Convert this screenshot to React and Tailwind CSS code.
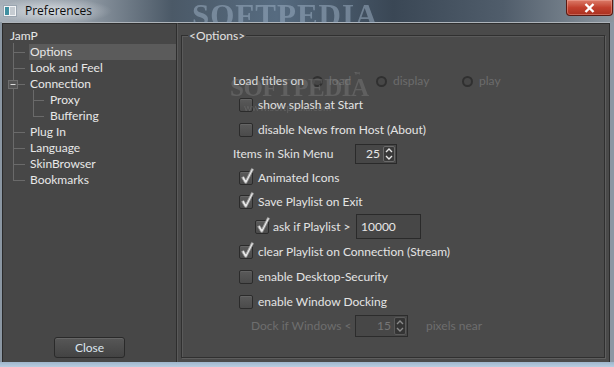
import React from "react";

const FONT = "font-['Lato','Open_Sans',sans-serif]";

function Check() {
  return (
    <svg className="absolute -left-[1px] -top-[5px]" width="16" height="18" viewBox="0 0 16 18">
      <path
        d="M2.6 10.6 L4.8 9.4 L6.9 12.9 L12.6 1.4 L14.6 2.4 L7.6 16.2 L5.9 16.2 Z"
        fill="#e8e8e8"
        stroke="#8a8a8a"
        strokeWidth="0.8"
        strokeLinejoin="round"
      />
      <path d="M7 13.2 L12.9 2" stroke="#b0b0b0" strokeWidth="0.6" fill="none" />
    </svg>
  );
}

function CheckBox({ checked }) {
  return (
    <span className="relative inline-block w-[14px] h-[14px] shrink-0 rounded-[2px] border border-[#2b2b2b] bg-linear-to-b from-[#5a5a5a] to-[#4b4b4b] shadow-[inset_0_1px_0_#646464]">
      {checked && <Check />}
    </span>
  );
}

function Radio({ label, w }) {
  return (
    <div className={`flex items-center gap-[6px] ${w}`}>
      <span className="inline-block w-[11px] h-[11px] rounded-full border-2 border-[#303030] bg-[#474747]" />
      <span className="text-[#6c6c6c]">{label}</span>
    </div>
  );
}

function Arrows({ disabled }) {
  const c = disabled ? "#8a8a8a" : "#e6e6e6";
  return (
    <span
      className={`flex flex-col items-center justify-center w-[12px] h-full rounded-[2px] border ${
        disabled ? "border-[#5a5a5a] bg-[#343434]" : "border-[#6a6a6a] bg-[#3a3a3a]"
      }`}
    >
      <svg width="8" height="5" viewBox="0 0 8 5">
        <path d="M1 4 L4 1 L7 4" stroke={c} strokeWidth="1.4" fill="none" />
      </svg>
      <svg width="8" height="5" viewBox="0 0 8 5" className="mt-[2px]">
        <path d="M1 1 L4 4 L7 1" stroke={c} strokeWidth="1.4" fill="none" />
      </svg>
    </span>
  );
}

function CheckRow({ label, checked, h }) {
  return (
    <div className={`flex items-center gap-[5px] ml-[57px] ${h}`}>
      <CheckBox checked={checked} />
      <span className="text-[#e4e4e4] whitespace-nowrap">{label}</span>
    </div>
  );
}

function TreeLines() {
  const ticks = [28, 44, 60, 108, 124, 140, 156];
  return (
    <svg className="absolute left-0 top-0" width="60" height="170" viewBox="0 0 60 170">
      <line x1="10.5" y1="19" x2="10.5" y2="156" stroke="#6a6a6a" strokeWidth="1" />
      {ticks.map((y) => (
        <line key={y} x1="10" y1={y + 0.5} x2="22" y2={y + 0.5} stroke="#6a6a6a" strokeWidth="1" />
      ))}
      <line x1="30.5" y1="66" x2="30.5" y2="92" stroke="#6a6a6a" strokeWidth="1" />
      <line x1="30" y1="76.5" x2="41" y2="76.5" stroke="#6a6a6a" strokeWidth="1" />
      <line x1="30" y1="92.5" x2="41" y2="92.5" stroke="#6a6a6a" strokeWidth="1" />
      <rect x="5.5" y="56.5" width="9" height="8" fill="#555" stroke="#6e6e6e" />
      <line x1="7.5" y1="60.5" x2="12.5" y2="60.5" stroke="#dcdcdc" strokeWidth="1" />
    </svg>
  );
}

function Tree() {
  const row = "h-[16px] leading-[16px] whitespace-nowrap";
  return (
    <div className="relative pt-[4px] text-[#e8e8e8]">
      <TreeLines />
      <div className={`${row} pl-[7px]`}>JamP</div>
      <div className={`${row} flex`}>
        <span className="ml-[26px] pl-[1px] flex-1 bg-[#5b5b5b]">Options</span>
      </div>
      <div className={`${row} pl-[27px]`}>Look and Feel</div>
      <div className={`${row} pl-[27px]`}>Connection</div>
      <div className={`${row} pl-[47px]`}>Proxy</div>
      <div className={`${row} pl-[47px]`}>Buffering</div>
      <div className={`${row} pl-[27px]`}>Plug In</div>
      <div className={`${row} pl-[27px]`}>Language</div>
      <div className={`${row} pl-[27px]`}>SkinBrowser</div>
      <div className={`${row} pl-[27px]`}>Bookmarks</div>
    </div>
  );
}

export default function App() {
  return (
    <div className={`${FONT} text-[12px] relative w-[614px] h-[367px] overflow-hidden flex flex-col bg-[#8c98a4]`}>
      {/* Title bar */}
      <div className="relative h-[22px] shrink-0 flex items-center bg-[radial-gradient(ellipse_60px_13px_at_52px_11px,rgba(235,238,242,0.75),transparent),linear-gradient(90deg,#a7b0b9_0%,#8f99a3_14%,#4b5967_28%,#566b80_45%,#3a4755_64%,#505d6b_82%,#8c969f_100%)]">
        <svg className="ml-[3px]" width="14" height="12" viewBox="0 0 14 12">
          <rect x="0.5" y="0.5" width="13" height="11" fill="#f2f4f6" stroke="#9aa5b0" />
          <rect x="2" y="2" width="4" height="8" fill="#3f8fa0" />
          <rect x="7" y="2" width="5" height="8" fill="#c6ccd2" />
        </svg>
        <span className="ml-[8px] text-[12px] text-[#0d0d0d] font-['Open_Sans',sans-serif]">Preferences</span>
        <span className="absolute left-[192px] -top-[7px] font-['Liberation_Serif',serif] font-bold text-[31px] tracking-[1px] text-[#9fb2c6] opacity-50 blur-[0.4px]">
          SOFTPEDIA
        </span>
        <div className="absolute right-[1px] top-0 w-[47px] h-[16px] rounded-b-[4px] border border-t-0 border-[#5a1a12] bg-linear-to-b from-[#dc7a68] via-[#c2412f] to-[#a9301f] flex items-center justify-center shadow-[inset_0_0_0_1px_rgba(255,200,190,0.35)]">
          <svg width="11" height="10" viewBox="0 0 11 10">
            <path d="M1.5 1 L9.5 9 M9.5 1 L1.5 9" stroke="#ffffff" strokeWidth="2.4" />
          </svg>
        </div>
      </div>

      {/* Body */}
      <div className="flex h-[340px] shrink-0 pl-[2px] pr-[4px] bg-[#8b97a3]">
        <div className="flex flex-1 border-t border-[#aeb4ba]">
          {/* Left panel */}
          <div className="w-[175px] shrink-0 flex flex-col bg-[#474747] border-l border-t border-r border-l-[#2a2a2a] border-t-[#2e2e2e] border-r-[#2e2e2e]">
            <Tree />
            <div className="mt-auto mb-[4px] flex justify-center">
              <div className="w-[71px] h-[21px] rounded-[3px] border border-[#2a2a2a] bg-linear-to-b from-[#575757] to-[#434343] shadow-[inset_0_1px_0_#666] flex items-center justify-center text-[#dde6ee] text-[12px]">
                Close
              </div>
            </div>
          </div>

          {/* Right panel */}
          <div className="relative flex-1 flex flex-col bg-[#4a4a4a] border-l border-t border-r border-l-[#5a5a5a] border-t-[#2e2e2e] border-r-[#2c2c2c] pl-[3px] pt-[11px] pr-[4px] pb-[4px]">
            <div className="flex-1 flex flex-col border border-[#303030] shadow-[1px_1px_0_#5e5e5e,inset_1px_1px_0_#5a5a5a]">
              <span className="self-start -mt-[8px] ml-[6px] px-[1px] h-[16px] leading-[16px] bg-[#4a4a4a] text-[#e2e2e2]">
                &lt;Options&gt;
              </span>

              <div className="mt-[25px] flex flex-col">
                {/* Load titles on */}
                <div className="flex items-center h-[24px] ml-[51px]">
                  <span className="w-[79px] text-[#e4e4e4] whitespace-nowrap">Load titles on</span>
                  <Radio label="load" w="w-[64px]" />
                  <Radio label="display" w="w-[86px]" />
                  <Radio label="play" w="" />
                </div>
                <CheckRow label="show splash at Start" h="h-[24px]" />
                <CheckRow label="disable News from Host (About)" h="h-[25px]" />
                {/* Items in skin menu */}
                <div className="flex items-center h-[24px] ml-[51px]">
                  <span className="w-[122px] text-[#e4e4e4] whitespace-nowrap">Items in Skin Menu</span>
                  <div className="flex items-center h-[20px] w-[42px] border border-[#2a2a2a] bg-[#474747] pr-[1px] py-[1px]">
                    <span className="flex-1 text-right pr-[3px] text-[#e8e8e8]">25</span>
                    <Arrows />
                  </div>
                </div>
                <CheckRow label="Animated Icons" checked h="h-[23px]" />
                <CheckRow label="Save Playlist on Exit" checked h="h-[25px]" />
                {/* ask if playlist */}
                <div className="flex items-center h-[25px] ml-[73px]">
                  <CheckBox checked />
                  <span className="ml-[4px] w-[83px] text-[#e4e4e4] whitespace-nowrap">ask if Playlist &gt;</span>
                  <div className="flex items-center h-[25px] w-[65px] border border-[#2a2a2a] bg-[#474747] pl-[4px] text-[#e8e8e8]">
                    10000
                  </div>
                </div>
                <CheckRow label="clear Playlist on Connection (Stream)" checked h="h-[25px]" />
                <CheckRow label="enable Desktop-Security" h="h-[25px]" />
                <CheckRow label="enable Window Docking" h="h-[25px]" />
                {/* Dock if windows */}
                <div className="flex items-center h-[24px] ml-[69px]">
                  <span className="w-[104px] text-[#6e6e6e] whitespace-nowrap">Dock if Windows &lt;</span>
                  <div className="flex items-center h-[22px] w-[53px] border border-[#2c2c2c] bg-[#474747] pr-[1px] py-[1px]">
                    <span className="flex-1 text-right pr-[3px] text-[#767676]">15</span>
                    <Arrows disabled />
                  </div>
                  <span className="ml-[18px] text-[#6e6e6e] whitespace-nowrap">pixels near</span>
                </div>
              </div>
            </div>

            {/* watermark overlay */}
            <span className="absolute left-[52px] top-[45px] font-['Liberation_Serif',serif] font-bold text-[25px] tracking-[-0.5px] text-[#8a8a8a] opacity-35 pointer-events-none">
              SOFTPEDIA
            </span>
            <span className="absolute left-[176px] top-[45px] text-[8px] text-[#8a8a8a] opacity-50 pointer-events-none">™</span>
            <span className="absolute left-[66px] top-[76px] text-[10px] text-[#8a8a8a] opacity-35 pointer-events-none">
              www.softpedia.com
            </span>
          </div>
        </div>
      </div>

      {/* bottom frame */}
      <div className="h-[5px] shrink-0 bg-linear-to-b from-[#9fb6cc] to-[#b8cde0]" />
    </div>
  );
}
